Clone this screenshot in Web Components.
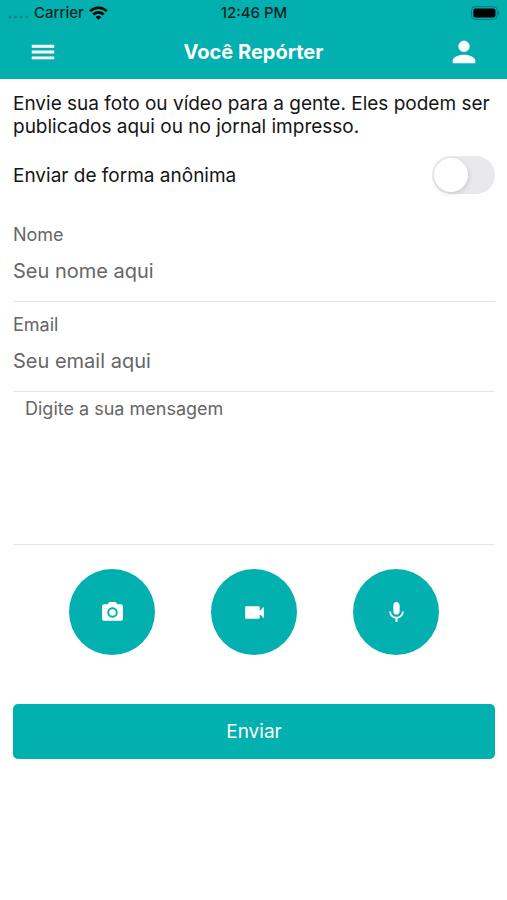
<!DOCTYPE html>
<html lang="pt-BR">
<head>
<meta charset="utf-8">
<meta name="viewport" content="width=device-width, initial-scale=1">
<title>Você Repórter</title>
<style>
  body {
    margin: 0;
    background: #fff;
    color: #151515;
    font-family: Inter, "Liberation Sans", sans-serif;
    font-size: 19px;
    --primary: #02b0af;
    --muted: #666;
    --line: #e4e4e6;
  }
</style>
</head>
<body>
<reporter-page></reporter-page>

<script>
class StatusBar extends HTMLElement {

    constructor() {
        super();
        this.shadowDOM = this.attachShadow({mode: "open"});
    }

    connectedCallback() {
        this.shadowDOM.innerHTML = `
        <style>
        :host {
          display: grid;
          grid-template-columns: 1fr auto 1fr;
          align-items: center;
          height: 25px;
          padding: 0 7px 0 8px;
          background-color: var(--primary);
          color: #062524;
          font-size: 15px;
          font-weight: 500;
        }

        .network {
          display: flex;
          align-items: center;
          gap: 5px;
        }

        .battery {
          justify-self: end;
        }

        svg {
          display: block;
        }
        </style>
        <div class="network">
          <svg width="21" height="12" viewBox="0 0 21 12" fill="#078684">
            <circle cx="2" cy="10" r="1.5"/><circle cx="7.6" cy="10" r="1.5"/>
            <circle cx="13.2" cy="10" r="1.5"/><circle cx="18.8" cy="10" r="1.5"/>
          </svg>
          <span>${this.getAttribute("carrier")}</span>
          <svg width="19" height="14" viewBox="0 0 19 14" fill="none" stroke="#000" stroke-width="2.6">
            <path d="M1.2 5.2a11.8 11.8 0 0 1 16.6 0"/>
            <path d="M4.3 8.5a7.4 7.4 0 0 1 10.4 0"/>
            <path d="M9.5 13.8 6.7 11a4 4 0 0 1 5.6 0z" fill="#000" stroke="none"/>
          </svg>
        </div>
        <time>${this.getAttribute("time")}</time>
        <svg class="battery" width="30" height="14" viewBox="0 0 30 14">
          <rect x="1.6" y=".7" width="25.6" height="12.6" rx="3.6" fill="none" stroke="#087977" stroke-width="1"/>
          <rect x="3.4" y="2.4" width="22" height="9.2" rx="2" fill="#000"/>
          <path d="M28.2 4.8q2.8 2.2 0 4.4z" fill="#087977"/>
        </svg>`;
    }
}

class AppHeader extends HTMLElement {

    constructor() {
        super();
        this.shadowDOM = this.attachShadow({mode: "open"});
    }

    connectedCallback() {
        this.shadowDOM.innerHTML = `
        <style>
        :host {
          display: block;
          background-color: var(--primary);
          color: #fff;
        }

        header {
          display: flex;
          align-items: center;
          justify-content: space-between;
          height: 54px;
          padding: 0 26px;
        }

        h1 {
          margin: 0;
          font-size: 20px;
          line-height: 24px;
          font-weight: 700;
        }

        button {
          display: grid;
          place-items: center;
          width: 34px;
          height: 34px;
          padding: 0;
          border: 0;
          background: none;
          color: inherit;
        }
        </style>
        <header>
          <button type="button" aria-label="Menu">
            <svg width="30" height="30" viewBox="0 0 24 24" fill="currentColor"><path d="M3 17.800h18v-2.300H3zM3 13.100h18v-2.300H3zM3 6.200v2.300h18V6.200z"/></svg>
          </button>
          <h1><slot></slot></h1>
          <button type="button" aria-label="Perfil">
            <svg width="34" height="34" viewBox="0 0 24 24" fill="currentColor"><path d="M12 12c2.210 0 4-1.790 4-4s-1.790-4-4-4-4 1.790-4 4 1.790 4 4 4zm0 2c-2.670 0-8 1.340-8 4v2h16v-2c0-2.660-5.330-4-8-4z"/></svg>
          </button>
        </header>`;
    }
}

class ToggleRow extends HTMLElement {

    constructor() {
        super();
        this.shadowDOM = this.attachShadow({mode: "open"});
    }

    get checked() {
        return this.shadowDOM.querySelector("#toggle").checked;
    }

    connectedCallback() {
        this.shadowDOM.innerHTML = `
        <style>
        :host {
          display: flex;
          align-items: center;
          justify-content: space-between;
        }

        input {
          appearance: none;
          display: flex;
          box-sizing: border-box;
          width: 63px;
          height: 38px;
          margin: 0;
          padding: 2px;
          border-radius: 19px;
          background-color: #e9e9eb;
        }

        input::before {
          content: "";
          width: 34px;
          height: 34px;
          border-radius: 50%;
          background-color: #fff;
          box-shadow: 1px 2px 5px rgba(0,0,0,0.12);
        }

        input:checked {
          justify-content: flex-end;
          background-color: var(--primary);
        }
        </style>
        <label for="toggle"><slot></slot></label>
        <input type="checkbox" role="switch" id="toggle">`;
    }
}

class TextField extends HTMLElement {

    constructor() {
        super();
        this.shadowDOM = this.attachShadow({mode: "open"});
    }

    get value() {
        return this.shadowDOM.querySelector("#field").value;
    }

    connectedCallback() {
        this.shadowDOM.innerHTML = `
        <style>
        :host {
          display: flex;
          flex-direction: column;
          padding: 11px 0 6px;
          border-bottom: 1px solid var(--line);
        }

        label {
          color: var(--muted);
          font-size: 18px;
          line-height: 24px;
        }

        input {
          box-sizing: border-box;
          width: 100%;
          height: 48px;
          padding: 0;
          border: 0;
          outline: none;
          background: none;
          color: inherit;
          font: inherit;
          font-size: 20px;
        }

        input::placeholder {
          color: var(--muted);
        }
        </style>
        <label for="field"><slot></slot></label>
        <input id="field" type="${this.getAttribute("type")}" placeholder="${this.getAttribute("placeholder")}">`;
    }
}

class MessageField extends HTMLElement {

    constructor() {
        super();
        this.shadowDOM = this.attachShadow({mode: "open"});
    }

    get value() {
        return this.shadowDOM.querySelector("textarea").value;
    }

    connectedCallback() {
        const text = this.getAttribute("placeholder");
        this.shadowDOM.innerHTML = `
        <style>
        :host {
          display: block;
          border-bottom: 1px solid var(--line);
        }

        textarea {
          display: block;
          box-sizing: border-box;
          width: 100%;
          height: 152px;
          padding: 5px 12px;
          border: 0;
          outline: none;
          resize: none;
          background: none;
          color: inherit;
          font: inherit;
          font-size: 18px;
          line-height: 24px;
        }

        textarea::placeholder {
          color: var(--muted);
        }
        </style>
        <textarea aria-label="${text}" placeholder="${text}"></textarea>`;
    }
}

const mediaIcons = {
    camera: `<circle cx="12" cy="12" r="3.200"/><path d="M9 2L7.170 4H4c-1.100 0-2 .9-2 2v12c0 1.100.9 2 2 2h16c1.100 0 2-.9 2-2V6c0-1.100-.9-2-2-2h-3.170L15 2H9zm3 15c-2.760 0-5-2.240-5-5s2.240-5 5-5 5 2.240 5 5-2.240 5-5 5z"/>`,
    video: `<path d="M17 10.500V7c0-.55-.45-1-1-1H4c-.55 0-1 .45-1 1v10c0 .55.45 1 1 1h12c.55 0 1-.45 1-1v-3.500l4 4v-11l-4 4z"/>`,
    mic: `<path d="M12 14c1.660 0 2.990-1.340 2.990-3L15 5c0-1.660-1.340-3-3-3S9 3.340 9 5v6c0 1.660 1.340 3 3 3zm5.300-3c0 3-2.540 5.100-5.300 5.100S6.700 14 6.700 11H5c0 3.410 2.720 6.230 6 6.720V21h2v-3.280c3.280-.48 6-3.300 6-6.720h-1.700z"/>`
};

class MediaButton extends HTMLElement {

    constructor() {
        super();
        this.shadowDOM = this.attachShadow({mode: "open"});
    }

    connectedCallback() {
        this.shadowDOM.innerHTML = `
        <style>
        :host {
          display: block;
        }

        button {
          display: grid;
          place-items: center;
          width: 86px;
          height: 86px;
          padding: 0;
          border: 0;
          border-radius: 50%;
          background-color: var(--primary);
          color: #fff;
        }
        </style>
        <button type="button" aria-label="${this.getAttribute("label")}">
          <svg width="25" height="25" viewBox="0 0 24 24" fill="currentColor">${mediaIcons[this.getAttribute("icon")]}</svg>
        </button>`;
    }
}

class SubmitButton extends HTMLElement {

    constructor() {
        super();
        this.shadowDOM = this.attachShadow({mode: "open"});
    }

    connectedCallback() {
        this.shadowDOM.innerHTML = `
        <style>
        :host {
          display: block;
        }

        button {
          width: 100%;
          height: 55px;
          padding: 0;
          border: 0;
          border-radius: 5px;
          background-color: var(--primary);
          color: #fff;
          font: inherit;
        }
        </style>
        <button type="submit"><slot></slot></button>`;
    }
}

class ReporterPage extends HTMLElement {

    constructor() {
        super();
        this.shadowDOM = this.attachShadow({mode: "open"});
    }

    connectedCallback() {
        this.shadowDOM.innerHTML = `
        <style>
        :host {
          display: block;
        }

        main {
          padding: 13px 12px 24px 13px;
        }

        p {
          margin: 0;
          line-height: 23px;
        }

        toggle-row {
          margin: 18px 0;
        }

        .media {
          display: flex;
          justify-content: space-evenly;
          margin: 24px 0 49px;
        }
        </style>
        <status-bar carrier="Carrier" time="12:46 PM"></status-bar>
        <app-header>Você Repórter</app-header>
        <main>
          <p>Envie sua foto ou vídeo para a gente. Eles podem ser publicados aqui ou no jornal impresso.</p>
          <toggle-row>Enviar de forma anônima</toggle-row>
          <text-field type="text" placeholder="Seu nome aqui">Nome</text-field>
          <text-field type="email" placeholder="Seu email aqui">Email</text-field>
          <message-field placeholder="Digite a sua mensagem"></message-field>
          <div class="media">
            <media-button icon="camera" label="Enviar foto"></media-button>
            <media-button icon="video" label="Enviar vídeo"></media-button>
            <media-button icon="mic" label="Enviar áudio"></media-button>
          </div>
          <submit-button>Enviar</submit-button>
        </main>`;
    }
}

customElements.define("status-bar", StatusBar);
customElements.define("app-header", AppHeader);
customElements.define("toggle-row", ToggleRow);
customElements.define("text-field", TextField);
customElements.define("message-field", MessageField);
customElements.define("media-button", MediaButton);
customElements.define("submit-button", SubmitButton);
customElements.define("reporter-page", ReporterPage);
</script>
</body>
</html>
